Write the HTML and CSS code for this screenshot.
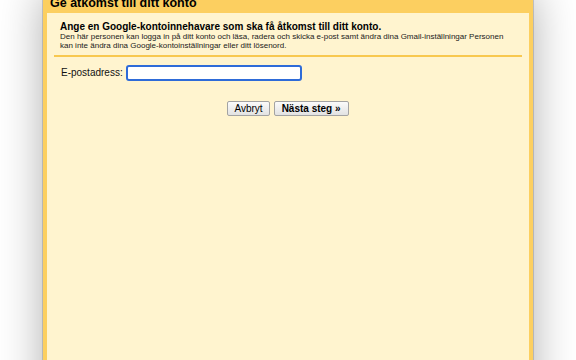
FILE: index.html
```html
<!DOCTYPE html>
<html lang="sv">
<head>
<meta charset="utf-8">
<title>Ge åtkomst till ditt konto</title>
<link rel="stylesheet" href="styles.css">
</head>
<body>
<div class="window">
  <div class="titlebar">Ge åtkomst till ditt konto</div>
  <div class="content">
    <div class="intro">
      <h1 class="intro-title">Ange en Google-kontoinnehavare som ska få åtkomst till ditt konto.</h1>
      <p class="intro-text">Den här personen kan logga in på ditt konto och läsa, radera och skicka e-post samt ändra dina Gmail-inställningar Personen kan inte ändra dina Google-kontoinställningar eller ditt lösenord.</p>
    </div>
    <div class="form-row">
      <label class="field-label" for="email">E-postadress:</label>
      <input class="email" id="email" type="text">
    </div>
    <div class="actions">
      <button class="btn" type="button">Avbryt</button>
      <button class="btn btn-primary" type="button">Nästa steg »</button>
    </div>
  </div>
</div>
</body>
</html>
```

FILE: styles.css
```css
html, body {
  margin: 0;
  padding: 0;
  background: #ffffff;
  overflow: hidden;
  height: 100%;
}

body {
  font-family: "Liberation Sans", Arial, sans-serif;
  color: #000;
}

.window {
  box-sizing: border-box;
  width: 490px;
  height: 420px;
  margin: -8px 0 0 43px;
  border: 4px solid #fccf60;
  background: #fff4cf;
  box-shadow: 0 0 0 1px rgba(120, 120, 120, 0.35), 0 0 42px rgba(0, 0, 0, 0.32);
}

.titlebar {
  height: 17px;
  padding: 0 0 0 3px;
  background: #fccf60;
  font-size: 12.5px;
  font-weight: bold;
  line-height: 15px;
  color: #000;
  white-space: nowrap;
}

.content {
  padding: 0 7px;
}

.intro {
  padding: 8px 6px 5px 6px;
  border-bottom: 2px solid #f8c84f;
}

.intro-title {
  margin: 0;
  font-size: 10px;
  line-height: 11px;
  font-weight: bold;
  color: #000;
}

.intro-text {
  margin: 0;
  font-size: 8px;
  line-height: 9px;
  color: #1a1a1a;
}

.form-row {
  display: flex;
  align-items: center;
  gap: 3px;
  padding: 8px 0 0 7px;
}

.field-label {
  font-size: 10px;
  line-height: 12px;
  color: #111;
}

.email {
  box-sizing: border-box;
  width: 176px;
  height: 16px;
  margin: 0;
  padding: 0 3px;
  border: 2px solid #2e6bd8;
  border-radius: 3px;
  background: #ffffff;
  outline: none;
  font-family: "Liberation Sans", Arial, sans-serif;
  font-size: 10px;
}

.actions {
  display: flex;
  justify-content: center;
  gap: 4px;
  margin-top: 20px;
}

.btn {
  box-sizing: border-box;
  height: 15px;
  margin: 0;
  padding: 0 6px;
  border: 1px solid #a3a3a3;
  border-radius: 2px;
  background: linear-gradient(#fbfbfb, #e2e2e2);
  font-family: "Liberation Sans", Arial, sans-serif;
  font-size: 10px;
  line-height: 13px;
  color: #000;
}

.btn-primary {
  font-weight: bold;
  padding: 0 7px;
}
```
